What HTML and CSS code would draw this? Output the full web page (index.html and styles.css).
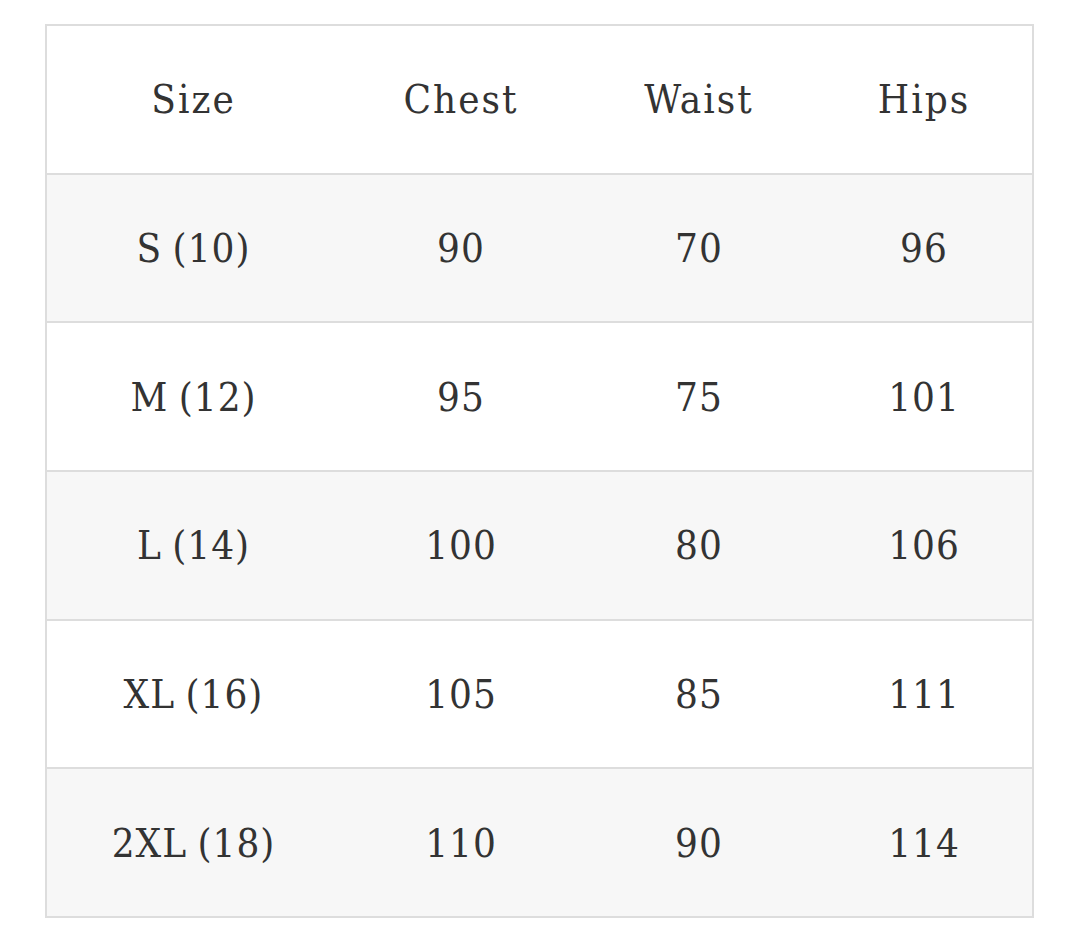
FILE: index.html
```html
<!DOCTYPE html>
<html lang="en">
<head>
<meta charset="utf-8">
<title>Size chart</title>
<link rel="stylesheet" href="styles.css">
</head>
<body>
<div class="page">
  <div class="chart">
    <div class="row head"><div class="cell">Size</div><div class="cell">Chest</div><div class="cell">Waist</div><div class="cell">Hips</div></div>
    <div class="row shade"><div class="cell">S (10)</div><div class="cell">90</div><div class="cell">70</div><div class="cell">96</div></div>
    <div class="row"><div class="cell">M (12)</div><div class="cell">95</div><div class="cell">75</div><div class="cell">101</div></div>
    <div class="row shade"><div class="cell">L (14)</div><div class="cell">100</div><div class="cell">80</div><div class="cell">106</div></div>
    <div class="row"><div class="cell">XL (16)</div><div class="cell">105</div><div class="cell">85</div><div class="cell">111</div></div>
    <div class="row shade"><div class="cell">2XL (18)</div><div class="cell">110</div><div class="cell">90</div><div class="cell">114</div></div>
  </div>
</div>
</body>
</html>
```
FILE: styles.css
```css
html, body {
  margin: 0;
  padding: 0;
  background: #ffffff;
}
.page {
  padding: 24px 31px 20px 45px;
}
.chart {
  width: 985px;
  border: 2px solid #dddddd;
  font-family: "DejaVu Serif Condensed", "DejaVu Serif", serif;
  font-size: 40px;
  color: #333333;
}
.row {
  display: grid;
  grid-template-columns: 293px 242px 234px 1fr;
  height: 146.7px;
  align-items: center;
  text-align: center;
  border-top: 2px solid #dddddd;
}
.row.head {
  border-top: none;
}
.row.shade {
  background: #f7f7f7;
}
.cell {
  letter-spacing: 1px;
  word-spacing: -2px;
}
.head .cell {
  letter-spacing: 2px;
}
```
